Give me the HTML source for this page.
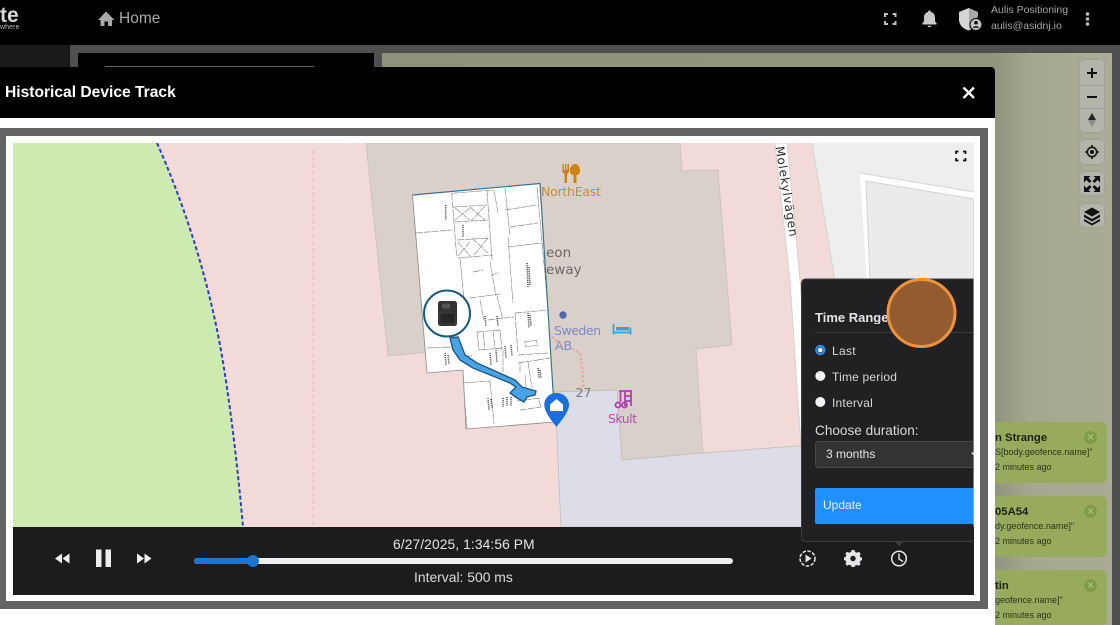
<!DOCTYPE html>
<html><head><meta charset="utf-8"><title>Historical Device Track</title>
<style>
html,body{margin:0;padding:0;width:1120px;height:625px;overflow:hidden;background:#fff}
body{font-family:"Liberation Sans",sans-serif;position:relative}
.a{position:absolute}
.t{position:absolute;white-space:nowrap;line-height:1}
svg{position:absolute;left:0;top:0}
.toast{position:absolute;left:995px;width:112px;background:#98ab5c;border-radius:0 5px 5px 0;overflow:hidden}
.toast b{position:absolute;left:0;top:10px;font-size:11.300px;color:#1d2211;white-space:nowrap}
.toast span{position:absolute;left:0;font-size:9px;color:#2d3319;white-space:nowrap;line-height:1}
.toast i{position:absolute;left:89px;top:9px;width:13px;height:13px;border-radius:50%;background:#7f9c48;color:#a9bd74;font-style:normal;font-size:12px;line-height:13px;text-align:center;font-weight:700}
.mb{position:absolute;left:1080px;width:24px;background:#b4b5aa;border-radius:4px;box-shadow:0 0 0 1px #a0a193}
</style></head>
<body>
<!-- backdrop -->
<div class="a" style="left:0;top:0;width:1120px;height:45px;background:#000"></div>
<div class="a" style="left:0;top:45px;width:1120px;height:580px;background:#4f4f4f"></div>
<div class="a" style="left:0;top:45px;width:70px;height:30px;background:#1a1a1a"></div>
<div class="a" style="left:78px;top:53px;width:296px;height:20px;background:#000"></div>
<div class="a" style="left:105px;top:66px;width:209px;height:1px;background:#666"></div>
<div class="a" style="left:382px;top:53px;width:730px;height:572px;background:linear-gradient(90deg,#8f917b 0,#92947e 613px,#a6a890 650px,#a9ab95 100%)"></div>

<!-- header -->
<div class="t" style="left:0;top:5px;font-size:21px;font-weight:700;color:#d8d8d8">te</div>
<div class="t" style="left:0;top:24px;font-size:7px;color:#bbb;letter-spacing:.1px">where</div>
<svg width="1120" height="45" viewBox="0 0 1120 45" style="z-index:1">
<path d="M98 20 L106 11.500 L114.500 20 H112 V26 H108 V21.500 H104.500 V26 H100.500 V20Z" fill="#aaa"/>
<g fill="none" stroke="#c0c0c0" stroke-width="2"><path d="M885 17V14H888M892.500 14H895.500V17M895.500 21V24H892.500M888 24H885V21"/></g>
<path d="M929.500 10.500c-.9 0-1.500.7-1.500 1.500-2.800.7-4 2.900-4 5.400v3.800l-1.700 2.300v1h14.400v-1l-1.700-2.300v-3.800c0-2.500-1.200-4.700-4-5.400 0-.8-.6-1.500-1.500-1.500zM927.500 25.800h4c0 1-.9 1.400-2 1.400s-2-.4-2-1.400z" fill="#c8c8c8"/>
<path d="M969 8 L959 12 V19 C959 25 963 29 969 30.500 L972 29 L978 16 V12Z" fill="#a8a8a8"/>
<path d="M969 8 L959 12 V19 C959 25 963 29 969 30.500Z" fill="#d4d4d4"/>
<circle cx="976" cy="24.500" r="6" fill="#c0c0c0" stroke="#000" stroke-width="1"/>
<circle cx="976" cy="22.700" r="1.700" fill="#000"/><path d="M972.800 27.800c.5-2 5.900-2 6.400 0z" fill="#000"/>
<circle cx="1087.500" cy="14" r="1.800" fill="#c0c0c0"/><circle cx="1087.500" cy="19" r="1.800" fill="#c0c0c0"/><circle cx="1087.500" cy="24" r="1.800" fill="#c0c0c0"/>
</svg>
<div class="t" style="left:119px;top:11px;font-size:15.500px;color:#a9a9a9">Home</div>
<div class="t" style="left:991px;top:5px;font-size:10.500px;color:#a5a5a5">Aulis Positioning</div>
<div class="t" style="left:991px;top:21px;font-size:10.500px;color:#a5a5a5">aulis@asidnj.io</div>

<!-- map side controls -->
<div class="mb" style="top:60px;height:72px"></div>
<div class="mb" style="top:140px;height:24px"></div>
<div class="mb" style="top:172px;height:23px"></div>
<div class="mb" style="top:204px;height:23px"></div>
<svg width="1120" height="240" viewBox="0 0 1120 240" style="z-index:1">
<path d="M1080 85.500H1104M1080 108.500H1104" stroke="#a0a193"/>
<path d="M1092 68V78M1087 73H1097M1087 97H1097" stroke="#111" stroke-width="2"/>
<path d="M1092 113L1096 120H1088Z" fill="#222"/><path d="M1092 127L1096 120H1088Z" fill="#8b8c84"/>
<circle cx="1092" cy="152" r="4.700" fill="none" stroke="#111" stroke-width="1.600"/><circle cx="1092" cy="152" r="2" fill="#111"/>
<path d="M1092 145V147M1092 157V159M1085 152H1087M1097 152H1099" stroke="#111" stroke-width="1.600"/>
<path d="M1084 176H1090.500L1088.500 178L1091.500 181L1089.500 183L1086.500 180L1084 182.500ZM1100 176H1093.500L1095.500 178L1092.500 181L1094.500 183L1097.500 180L1100 182.500ZM1084 192H1090.500L1088.500 190L1091.500 187L1089.500 185L1086.500 188L1084 185.500ZM1100 192H1093.500L1095.500 190L1092.500 187L1094.500 185L1097.500 188L1100 185.500Z" fill="#111"/>
<path d="M1092 207.500L1100 212L1092 216.500L1084 212Z" fill="#111"/>
<path d="M1084 214.500L1092 219L1100 214.500L1100 217L1092 221.500L1084 217ZM1084 219L1092 223.500L1100 219V221L1092 225.500L1084 221Z" fill="#111"/>
</svg>

<!-- toasts -->
<div class="toast" style="top:422px;height:61px"><b>n Strange</b><span style="top:26px">S[body.geofence.name]"</span><span style="top:41px">2 minutes ago</span><i>×</i></div>
<div class="toast" style="top:496px;height:61px"><b>05A54</b><span style="top:26px">dy.geofence.name]"</span><span style="top:41px">2 minutes ago</span><i>×</i></div>
<div class="toast" style="top:570px;height:55px"><b>tin</b><span style="top:26px">geofence.name]"</span><span style="top:41px">2 minutes ago</span><i>×</i></div>

<!-- modal -->
<div class="a" style="left:0;top:67px;width:995px;height:558px;background:#fff;border-radius:0 4px 0 0;overflow:hidden">
 <div class="a" style="left:0;top:0;width:995px;height:51px;background:#000"></div>
 <div class="a" style="left:0;top:61px;width:988px;height:481px;background:#646464"></div>
 <div class="a" style="left:6px;top:69px;width:974px;height:465px;background:#fff"></div>
</div>
<div class="t" style="left:5px;top:85px;font-size:15.600px;font-weight:700;color:#fff">Historical Device Track</div>
<svg width="1120" height="110" viewBox="0 0 1120 110" style="z-index:2"><path d="M963.500 87.500L974 98M974 87.500L963.500 98" stroke="#fff" stroke-width="2.300"/></svg>

<!-- map -->
<svg width="1120" height="625" viewBox="0 0 1120 625" style="z-index:3;font-family:'DejaVu Sans',sans-serif">
<defs>
<clipPath id="mc"><rect x="13" y="143" width="961" height="384"/></clipPath>
<clipPath id="pc"><rect x="0" y="0" width="973.500" height="625"/></clipPath>
<clipPath id="fp"><path d="M412.500 195L540 183.500L555 422L466 429L463 370L427 373Z"/></clipPath>
</defs>
<g clip-path="url(#mc)">
<rect x="13" y="143" width="961" height="384" fill="#f2dad9"/>
<path d="M13 143H157C180 195 205 265 220 345C230 400 238 470 243 527H13Z" fill="#cdebb0"/>
<path d="M157 143C180 195 205 265 220 345C230 400 238 470 243 527" fill="none" stroke="#2b3fc9" stroke-width="2" stroke-dasharray="4 2.500"/>
<path d="M313.500 150V527" stroke="#e6c4c2" stroke-width="1.500" stroke-dasharray="4 3"/>
<path d="M812 143H974V527H876Z" fill="#eeeeee"/>
<path d="M812 143L876 527" stroke="#cfcfcf" stroke-width=".8"/>
<path d="M775 143H787L800 280L812 445H801L790 280Z" fill="#fff" stroke="#cfc9c5" stroke-width=".7"/>
<path d="M366 143H680L682 171L718 170L732 345L696 349L703 453L622 460L617 390L555 392L470 372L430 352L388 356Z" fill="#d9d0c9" stroke="#c6bdb6" stroke-width=".7"/>
<path d="M555 392L617 390L622 460L703 453L810 445V527H561Z" fill="#dddde8" stroke="#bdb9bb" stroke-width=".7"/>
<path d="M860 173L974 192V200L866 181L874 300H868Z" fill="#fff"/>
<path d="M866 181L974 199V527H880Z" fill="#ebebeb" stroke="#d2d2d2"/>
<path d="M860 173L974 192" stroke="#d6d6d6"/>
<path d="M956 154V151.500H958.500M963 151.500H965.500V154M965.500 158V160.500H963M958.500 160.500H956V158" fill="none" stroke="#111" stroke-width="1.700"/>

<!-- pois -->
<g fill="#d07f14"><path d="M562.500 164H563.900V170H565V164H566.400V170H567.500V164H569V172L567 174V183H564.500V174L562.500 172Z"/><path d="M575 164C578 164 580 167 580 171C580 174 578 175 576.500 175V183H573.500V175C572 175 570 174 570 171C570 167 572 164 575 164Z"/></g>
<text x="541" y="196" font-size="12.500" fill="#c98a3d" textLength="60">NorthEast</text>
<text x="546" y="257" font-size="13.500" fill="#6d6763">eon</text>
<text x="546" y="274" font-size="13.500" fill="#6d6763">eway</text>
<circle cx="563" cy="315" r="3.700" fill="#4f6aaa"/>
<text x="554" y="335" font-size="12.500" fill="#7f89bd" textLength="47">Sweden</text>
<text x="555" y="350" font-size="12.500" fill="#7f89bd">AB</text>
<path d="M613.500 324V334.500M630.500 327.500V334.500M613.500 332.500H630.500" fill="none" stroke="#3aa0d8" stroke-width="1.700"/>
<path d="M616 327H629V330.500H616Z" fill="#3aa0d8"/>
<path d="M552 337L561 344M572 349L580 353C582 365 583 375 583 387" fill="none" stroke="#eda6a0" stroke-width="2.400" stroke-dasharray="2.500 2"/>
<text x="575.500" y="397" font-size="12.500" fill="#7d7874">27</text>
<g fill="none" stroke="#ad3fae" stroke-width="1.800"><path d="M619 391H631V406M625 391V406M631 396H625M631 401H625M620.500 391V402"/><circle cx="618" cy="405" r="2.500"/><circle cx="624.500" cy="405" r="2.500"/></g>
<text x="608" y="423" font-size="12.500" fill="#b04fb0" textLength="29">Skult</text>
<text transform="translate(775.500 147) rotate(81)" font-size="12" fill="#2c2c2c" textLength="91">Molekylvägen</text>

<!-- floorplan -->
<path d="M412.500 195L540 183.500L555 422L466 429L463 370L427 373Z" fill="#fff"/>
<g clip-path="url(#fp)">
<g fill="none" stroke="#858585" stroke-width=".65" stroke-dasharray="7 1">
<path d="M451.700 193.300L493 190M451.700 193L456.700 257M416 233L451.700 230M453 207L487 205M455 222L488 220M455 208L470 220M470 208L455 220M470 207L485 220M485 206L471 221M487 190L492 260M494 190L498 213M505 188L510 235M505 210L537 205M510 227L538 223M508 247L542 243M508 237L513 303M537 187L547 297"/>
<path d="M457 240L490 238M458 258L493 255M458 242L470 256M470 242L458 256M472 238L488 253M488 238L474 255M460 258L464 300M470 298L500 294M473 272L483 270M490 262L496 296M491 276L499 272"/>
<path d="M427 348L453 347M515 313L518 353M515 313L548 310M518 355L548 353M477 332L500 330M477 332L479 350M500 330L502 350M479 350L502 348M483 332L485 350M493 331L495 349"/>
<path d="M537 360L550 358M518 363L538 360M520 372L520 362M463 383L490 381M463 383L467 428M490 381L494 424M517 401L540 398M520 410L541 407M541 407L538 398M525 375L527 398M465 356L473 356M503 350L503 372M528 362L532 388"/>
<path d="M480 300L484 320M497 296L503 320M488 320L514 317"/>
<rect x="525" y="341" width="12" height="5" transform="rotate(-5 531 343)"/>
</g>
<g fill="none" stroke="#444" stroke-width="1.500" stroke-dasharray="1 .9">
<path d="M445.700 205V220M463 225V237M527 263L528 287M529 267L530 285M528 313L529 328M530 315L531 326M538 368L539 378M540 370L541 378M445 353L446 365M448 355L449 364M488 398L489 410M491 399L492 408M503 398L503 407M507 397L507 406M511 397L511 406M490 353L491 365M496 350L497 362M505 346L506 358M511 345L512 356M476 362L478 370M448 296L449 303M468 310L469 318M485 316L486 326M497 316L498 326"/>
</g>
</g>
<path d="M412.500 195L540 183.500L555 422" fill="none" stroke="#3f6f8c" stroke-width="1.200"/>
<path d="M412.500 195L427 373L463 370L466 429L555 422" fill="none" stroke="#888" stroke-width=".8"/>

<!-- track -->
<path d="M450 338L458 337L460 342L465 355L477 363L515 380L522 387L536 391L535 395L527 397L524 402L517 398L510 393L516 387L510 383L473 368L460 360L453 350Z" fill="#4aa3e6" stroke="#1f5a85" stroke-width="1.400" stroke-linejoin="round"/>

<!-- device -->
<circle cx="447" cy="313.500" r="23" fill="#fff" stroke="#1f5a7d" stroke-width="2"/>
<rect x="438" y="301" width="19" height="25" rx="2.500" fill="#333"/>
<rect x="442" y="303.500" width="8" height="5" rx="1" fill="#555"/><rect x="440" y="313" width="15" height="11" rx="1" fill="#262626" stroke="#4a4a4a" stroke-width=".6"/>

<!-- pin -->
<path d="M556.500 393C563.500 393 569 398 569 405C569 412 561 421 556.500 427C552 421 544.300 412 544.300 405C544.300 398 549.500 393 556.500 393Z" fill="#1a6fe0"/>
<path d="M556.500 399L563 404.500V411H550V404.500Z" fill="#fff"/>
</g>

<!-- control bar -->
<rect x="13" y="527" width="961" height="68" fill="#1c1c1e"/>
<path d="M62 553.500L55 558.500L62 563.500ZM69.500 553.500L62.500 558.500L69.500 563.500Z" fill="#eee"/>
<rect x="96" y="549.500" width="5.500" height="17.500" fill="#eee"/><rect x="105.500" y="549.500" width="5.500" height="17.500" fill="#eee"/>
<path d="M137 553.500L144 558.500L137 563.500ZM144.500 553.500L151.500 558.500L144.500 563.500Z" fill="#eee"/>
<rect x="194" y="558" width="539" height="6" rx="3" fill="#eee"/>
<rect x="194" y="558" width="60" height="6" rx="3" fill="#1976d2"/>
<circle cx="253" cy="561" r="6" fill="#1976d2"/>
<circle cx="807.500" cy="558.500" r="7.500" fill="none" stroke="#e5e5e5" stroke-width="1.500" stroke-dasharray="3.500 1.500"/>
<path d="M805.500 554.500L811.500 558.500L805.500 562.500Z" fill="#e5e5e5"/>
<path d="M851.500 551H854.500L855 553L857 553.800L858.800 552.800L860.700 554.700L859.700 556.500L860.500 558.300L862 558.800V561.200L860.500 561.700L859.700 563.500L860.700 565L858.800 566.700L857 566L855 566.700L854.500 568H851.500L851 566.300L849 565.800L847.200 566.700L845.300 565L846.300 563.500L845.500 561.500L844 561V558.500L845.500 558L846.300 556.300L845.300 554.700L847.200 552.800L849 553.800L851 553Z" transform="translate(0 -1)" fill="#e5e5e5"/>
<circle cx="853" cy="558.500" r="2.700" fill="#1c1c1e"/>
<circle cx="899" cy="558.500" r="7.300" fill="none" stroke="#e5e5e5" stroke-width="1.500"/>
<path d="M899 553.500V559L903 561.500" fill="none" stroke="#e5e5e5" stroke-width="1.400"/>

<!-- popup -->
<g clip-path="url(#pc)">
<path d="M980 279H806Q801.500 279 801.500 284V537Q801.500 541.500 806 541.500H980Z" fill="#212123" stroke="#3c3c3e"/>
<path d="M894 541.500H904L899 546Z" fill="#3c3c3e"/>
<rect x="815" y="332" width="158" height="1" fill="#3b3b3d"/>
<circle cx="820.300" cy="350" r="4" fill="#212123" stroke="#1f8fff" stroke-width="2.400"/><circle cx="820.300" cy="350" r="2.300" fill="#fff"/>
<circle cx="820.300" cy="376" r="5" fill="#f5f5f5"/>
<circle cx="820.300" cy="402" r="5" fill="#f5f5f5"/>
<rect x="815.500" y="441.500" width="170" height="26" rx="3" fill="#333335" stroke="#48484a"/>
<path d="M971 452.500H977L974 456Z" fill="#eee"/>
<rect x="815" y="488" width="170" height="36" rx="2" fill="#1e90ff"/>
<circle cx="921.500" cy="313" r="33.500" fill="#925c2f" stroke="#f0923b" stroke-width="3"/>
</g>
</svg>

<div style="position:absolute;left:0;top:0;z-index:4;width:974px;height:625px;overflow:hidden;color:#e6e6e6">
<div class="t" style="left:393px;top:538px;font-size:13.800px;letter-spacing:.1px;color:#e5e5e5">6/27/2025, 1:34:56 PM</div>
<div class="t" style="left:414px;top:571px;font-size:13.900px;color:#dcdcdc">Interval: 500 ms</div>
<div class="t" style="left:815px;top:311px;font-size:13px;font-weight:700;color:#e5e5e5;width:72px;overflow:hidden">Time Range</div>
<div class="t" style="left:832px;top:345px;font-size:12px;letter-spacing:.3px;color:#d8d8d8">Last</div>
<div class="t" style="left:832px;top:371px;font-size:12px;letter-spacing:.2px;color:#d8d8d8">Time period</div>
<div class="t" style="left:832px;top:397px;font-size:12px;letter-spacing:.2px;color:#d8d8d8">Interval</div>
<div class="t" style="left:815px;top:424px;font-size:13.600px;color:#d8d8d8">Choose duration:</div>
<div class="t" style="left:826px;top:448px;font-size:12px;color:#e5e5e5">3 months</div>
<div class="t" style="left:823px;top:499px;font-size:12px;color:#e8f2ff">Update</div>
</div>
</body></html>
